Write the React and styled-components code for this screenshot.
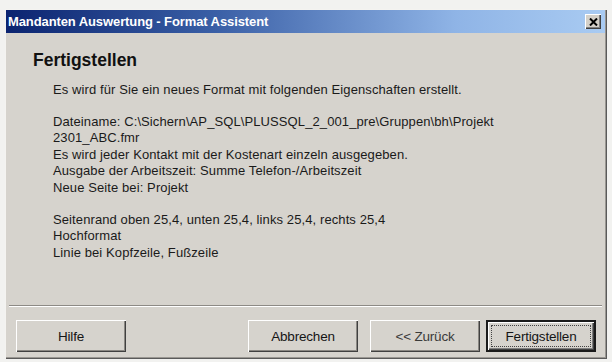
import React from 'react'
import styled, { createGlobalStyle } from 'styled-components'

const GlobalStyle = createGlobalStyle`
  html, body {
    margin: 0;
    padding: 0;
    background: #f2f2f0;
  }
  body {
    width: 612px;
    height: 362px;
    overflow: hidden;
    font-family: "Liberation Sans", Arial, sans-serif;
    color: #151515;
  }
`

const Page = styled.div`
  width: 612px;
  height: 362px;
  box-sizing: border-box;
  padding: 9px 5px 3px 5px;
`

const Window = styled.div`
  height: 100%;
  box-sizing: border-box;
  padding: 1px 2px 2px 1px;
  display: flex;
  flex-direction: column;
  background: #d6d3cd;
  box-shadow: inset 1px 1px 0 #f4f3f0, inset -1px -1px 0 #5a5a5a, inset -2px -2px 0 #9a9792;
`

const TitleBar = styled.div`
  height: 23px;
  flex: none;
  padding: 0 4px 0 2px;
  display: flex;
  align-items: center;
  justify-content: space-between;
  background: linear-gradient(to right, #0b2470 0%, #3a5fa6 35%, #8fb4e6 75%, #a9cbf2 100%);
`

const TitleText = styled.span`
  color: #ffffff;
  font-weight: bold;
  font-size: 13px;
  letter-spacing: -0.1px;
`

const CloseButton = styled.div`
  width: 16px;
  height: 15px;
  box-sizing: border-box;
  display: flex;
  align-items: center;
  justify-content: center;
  background: #d4d0c8;
  box-shadow: inset 1px 1px 0 #ffffff, inset -1px -1px 0 #404040, inset -2px -2px 0 #808080;
`

const Content = styled.div`
  flex: 1;
  padding: 16px 0 0 27px;
`

const Heading = styled.h1`
  margin: 0;
  font-size: 17.5px;
  line-height: 22px;
  font-weight: bold;
  color: #111;
`

const Body = styled.div`
  padding-left: 20px;
  margin-top: ${p => p.$top}px;
  font-size: 13px;
  line-height: 16.6px;
  letter-spacing: 0.1px;
  color: #1a1a1a;
`

const Separator = styled.div`
  height: 0;
  margin: 0 3px 0 3px;
  border-top: 1px solid #8d8a85;
  border-bottom: 1px solid #ffffff;
`

const ButtonRow = styled.div`
  display: flex;
  align-items: center;
  padding: 13px 9px 5px 10px;
`

const Spacer = styled.div`
  flex: 1;
`

const Button = styled.div`
  position: relative;
  width: ${p => p.$w || 110}px;
  height: 32px;
  margin-left: ${p => p.$gap || 0}px;
  box-sizing: border-box;
  display: flex;
  align-items: center;
  justify-content: center;
  font-size: 13.5px;
  letter-spacing: -0.2px;
  color: ${p => (p.$muted ? '#3a3a3a' : '#151515')};
  background: #d6d3cd;
  box-shadow: ${p =>
    p.$default
      ? 'inset 0 0 0 2px #1a1a1a, inset 3px 3px 0 #ffffff, inset -3px -3px 0 #404040, inset -4px -4px 0 #808080'
      : 'inset 1px 1px 0 #ffffff, inset -1px -1px 0 #404040, inset -2px -2px 0 #8a8782'};

  ${p =>
    p.$default &&
    `&::after {
      content: '';
      position: absolute;
      inset: 5px;
      border: 1px dotted #444;
    }`}
`

export default function App() {
  return (
    <Page>
      <GlobalStyle />
      <Window>
        <TitleBar>
          <TitleText>Mandanten Auswertung - Format Assistent</TitleText>
          <CloseButton>
            <svg width="9" height="8" viewBox="0 0 9 8">
              <path d="M1 0.5 L8 7.5 M8 0.5 L1 7.5" stroke="#000" strokeWidth="2" />
            </svg>
          </CloseButton>
        </TitleBar>
        <Content>
          <Heading>Fertigstellen</Heading>
          <Body $top={11}>Es wird für Sie ein neues Format mit folgenden Eigenschaften erstellt.</Body>
          <Body $top={15}>
            Dateiname: C:\Sichern\AP_SQL\PLUSSQL_2_001_pre\Gruppen\bh\Projekt
            <br />
            2301_ABC.fmr
            <br />
            Es wird jeder Kontakt mit der Kostenart einzeln ausgegeben.
            <br />
            Ausgabe der Arbeitszeit: Summe Telefon-/Arbeitszeit
            <br />
            Neue Seite bei: Projekt
          </Body>
          <Body $top={15}>
            Seitenrand oben 25,4, unten 25,4, links 25,4, rechts 25,4
            <br />
            Hochformat
            <br />
            Linie bei Kopfzeile, Fußzeile
          </Body>
        </Content>
        <Separator />
        <ButtonRow>
          <Button>Hilfe</Button>
          <Spacer />
          <Button>Abbrechen</Button>
          <Button $gap={12} $muted>&lt;&lt; Zurück</Button>
          <Button $gap={6} $default>Fertigstellen</Button>
        </ButtonRow>
      </Window>
    </Page>
  )
}
